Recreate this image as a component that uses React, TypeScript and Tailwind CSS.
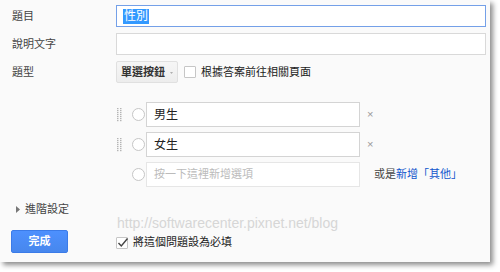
import React from "react";

const font = { fontFamily: '"Liberation Sans", "Noto Sans CJK TC", sans-serif' };

const DragHandle = () => (
  <svg width="6" height="14" viewBox="0 0 6 14" className="shrink-0">
    {[0, 1, 2, 3, 4, 5, 6].map((r) =>
      [0, 1].map((c) => <rect key={`${r}-${c}`} x={c * 3} y={r * 2} width="1.5" height="1.2" fill="#b5b5b5" />)
    )}
  </svg>
);

const Radio = () => <div className="w-[13px] h-[13px] rounded-full border border-[#c6c6c6] bg-white shrink-0" />;

const OptionRow = ({ value, placeholder, handle }: { value?: string; placeholder?: string; handle?: boolean }) => (
  <div className="flex items-center h-[25px]">
    <div className="w-[14px] flex justify-start pl-[1px]">{handle && <DragHandle />}</div>
    <div className="w-[16px] flex justify-center">
      <Radio />
    </div>
    <div
      className={`w-[214px] h-[25px] bg-white border flex items-center px-[7px] whitespace-nowrap ${
        placeholder ? "border-[#e6e6e6] text-[#bbb] text-[11px]" : "border-[#d4d4d4] text-[#222] text-[12px]"
      }`}
    >
      {value ?? placeholder}
    </div>
    {handle ? (
      <span className="ml-[7px] text-[11px] text-[#999]">×</span>
    ) : (
      <span className="ml-[14px] text-[11px] text-[#444] whitespace-nowrap">
        或是<span className="text-[#1155cc]">新增「其他」</span>
      </span>
    )}
  </div>
);

export default function App() {
  return (
    <div className="w-[500px] h-[272px] bg-white" style={font}>
      <div className="w-[490px] h-[262px] bg-[#fafafa] shadow-[3px_3px_5px_rgba(0,0,0,0.45)] pt-[5px] text-[#444] text-[11px]">
        <div className="flex items-center h-[22px]">
          <div className="w-[116px] pl-[12px]">題目</div>
          <div className="w-[370px] h-[22px] bg-white border border-[#74a0e8] flex items-center px-[6px] text-[12px]">
            <span className="bg-[#3399ff] text-white px-[1px] leading-[15px]">性別</span>
          </div>
        </div>
        <div className="flex items-center h-[22px] mt-[6px]">
          <div className="w-[116px] pl-[12px]">說明文字</div>
          <div className="w-[370px] h-[22px] bg-white border border-[#d9d9d9]" />
        </div>
        <div className="flex items-center h-[22px] mt-[6px]">
          <div className="w-[116px] pl-[12px]">題型</div>
          <div className="h-[22px] w-[62px] rounded-[2px] border border-[#e0e0e0] bg-gradient-to-b from-[#f6f6f6] to-[#ededed] flex items-center px-[4px] text-[11px] font-bold text-[#333] whitespace-nowrap">
            單選按鈕
            <svg width="7" height="4" viewBox="0 0 7 4" className="ml-[5px] mt-[1px]">
              <path d="M0 0h7L3.5 4z" fill="#999" />
            </svg>
          </div>
          <div className="ml-[6px] w-[12px] h-[12px] border border-[#c6c6c6] bg-white rounded-[1px]" />
          <span className="ml-[5px] text-[11px] text-[#222] whitespace-nowrap">根據答案前往相關頁面</span>
        </div>

        <div className="ml-[116px] mt-[19px] flex flex-col gap-[5px]">
          <OptionRow value="男生" handle />
          <OptionRow value="女生" handle />
          <OptionRow placeholder="按一下這裡新增選項" />
        </div>

        <div className="flex items-center mt-[15px] pl-[16px] h-[14px] text-[11px]">
          <svg width="4" height="7" viewBox="0 0 4 7" className="mr-[5px]">
            <path d="M0 0l4 3.5L0 7z" fill="#777" />
          </svg>
          進階設定
        </div>

        <div className="flex">
          <div className="w-[116px] pl-[11px] pt-[14px]">
            <div className="w-[57px] h-[23px] rounded-[2px] bg-gradient-to-b from-[#4d90fe] to-[#4787ed] border border-[#3b7be8] text-white text-[11px] font-bold flex items-center justify-center">
              完成
            </div>
          </div>
          <div className="flex flex-col">
            <div className="text-[14px] text-[#d6d6d6] leading-[16px] mt-[-1px] ml-[1px]" style={{ fontFamily: '"Liberation Sans", Arial, sans-serif' }}>
              http://softwarecenter.pixnet.net/blog
            </div>
            <div className="flex items-center mt-[5px] h-[13px]">
              <div className="w-[12px] h-[12px] border border-[#c6c6c6] bg-white rounded-[1px] relative">
                <svg width="12" height="11" viewBox="0 0 12 11" className="absolute left-[0px] -top-[1px]">
                  <path d="M1.5 6l2.8 3L10.5 1.5" stroke="#444" strokeWidth="1.4" fill="none" />
                </svg>
              </div>
              <span className="ml-[5px] text-[11px] text-[#222] whitespace-nowrap">將這個問題設為必填</span>
            </div>
          </div>
        </div>
      </div>
    </div>
  );
}
